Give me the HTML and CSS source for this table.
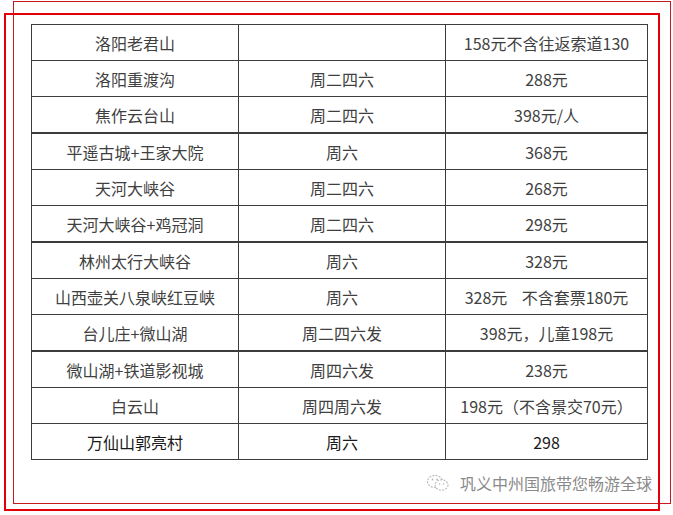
FILE: index.html
```html
<!DOCTYPE html>
<html lang="zh">
<head>
<meta charset="utf-8">
<title>线路价格</title>
<link rel="stylesheet" href="styles.css">
</head>
<body>
<div class="page">
  <div class="frame-thin"></div>
  <div class="frame">
    <table class="price">
      <tr><td>洛阳老君山</td><td></td><td>158元不含往返索道130</td></tr>
      <tr><td>洛阳重渡沟</td><td>周二四六</td><td>288元</td></tr>
      <tr><td>焦作云台山</td><td>周二四六</td><td>398元/人</td></tr>
      <tr class="sep"><td>平遥古城+王家大院</td><td>周六</td><td>368元</td></tr>
      <tr><td>天河大峡谷</td><td>周二四六</td><td>268元</td></tr>
      <tr><td>天河大峡谷+鸡冠洞</td><td>周二四六</td><td>298元</td></tr>
      <tr class="sep"><td>林州太行大峡谷</td><td>周六</td><td>328元</td></tr>
      <tr><td>山西壶关八泉峡红豆峡</td><td>周六</td><td>328元&nbsp;&nbsp;&nbsp;&nbsp;不含套票180元</td></tr>
      <tr><td>台儿庄+微山湖</td><td>周二四六发</td><td>398元，儿童198元</td></tr>
      <tr class="sep"><td>微山湖+铁道影视城</td><td>周四六发</td><td>238元</td></tr>
      <tr><td>白云山</td><td>周四周六发</td><td>198元（不含景交70元）</td></tr>
      <tr class="last"><td>万仙山郭亮村</td><td>周六</td><td>298</td></tr>
    </table>
    <div class="footer">
      <svg class="wx" width="24" height="18" viewBox="0 0 24 18" aria-hidden="true">
        <ellipse cx="9" cy="7.5" rx="7.5" ry="6" fill="none" stroke="#b8b8b8" stroke-width="1.1" stroke-dasharray="2 1.2"/>
        <ellipse cx="15.5" cy="11" rx="6.5" ry="5.2" fill="#fff" stroke="#b8b8b8" stroke-width="1.1" stroke-dasharray="2 1.2"/>
        <circle cx="6.5" cy="5.5" r="0.9" fill="#b8b8b8"/>
        <circle cx="11" cy="5.5" r="0.9" fill="#b8b8b8"/>
        <circle cx="13.5" cy="10" r="0.8" fill="#b8b8b8"/>
        <circle cx="17.5" cy="10" r="0.8" fill="#b8b8b8"/>
      </svg>
      <span class="brand">巩义中州国旅带您畅游全球</span>
    </div>
  </div>
</div>
</body>
</html>
```

FILE: styles.css
```css
html, body {
  margin: 0;
  padding: 0;
  background: #fff;
}
body {
  font-family: "Noto Sans CJK SC", "Noto Sans", sans-serif;
  color: #3f3f3f;
}
.page {
  position: relative;
  width: 673px;
  height: 515px;
  overflow: hidden;
}
.frame-thin {
  position: absolute;
  left: 13px;
  top: 1px;
  width: 658px;
  height: 503px;
  box-sizing: border-box;
  border: 1px solid #c8191e;
  pointer-events: none;
}
.frame {
  position: relative;
  margin: 13px 0 0 4px;
  width: 656px;
  height: 498px;
  box-sizing: border-box;
  border: 2px solid #e3000b;
  padding: 9px 0 0 25px;
}
.price {
  border-collapse: collapse;
  width: 617px;
  table-layout: fixed;
}
.price td {
  border: 1px solid #3c3c3c;
  height: 35px;
  padding: 0;
  text-align: center;
  vertical-align: middle;
  font-size: 16px;
  line-height: 20px;
  white-space: nowrap;
}
.price td:nth-child(1) { width: 206px; }
.price td:nth-child(2) { width: 206px; }
.price tr.sep td {
  border-top: 2px solid #3c3c3c;
}
.price tr.last td {
  color: #1a1a1a;
}
.footer {
  display: flex;
  justify-content: flex-end;
  align-items: center;
  gap: 10px;
  padding: 13px 6px 0 0;
}
.wx {
  display: block;
}
.brand {
  font-size: 16px;
  line-height: 20px;
  color: #8a8a8a;
}
```
